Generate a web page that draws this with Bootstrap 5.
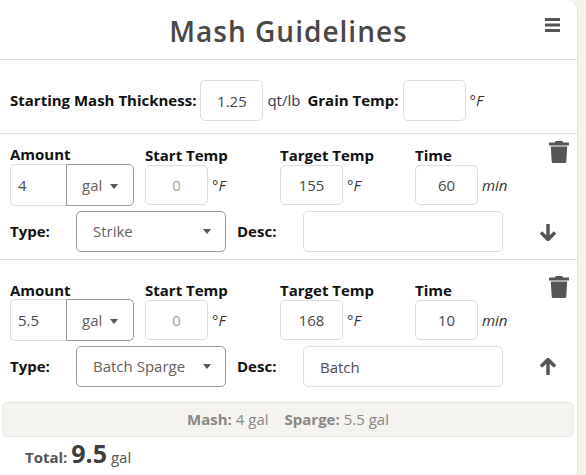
<!DOCTYPE html>
<html lang="en">

<head>
    <meta charset="UTF-8">
    <meta name="viewport" content="width=device-width, initial-scale=1.0">
    <title>Mash Guidelines</title>
    <link href="https://cdn.jsdelivr.net/npm/bootstrap@5.3.0/dist/css/bootstrap.min.css" rel="stylesheet">
    <style>
        body { background: #f4f3ef; font-family: "Open Sans", sans-serif; font-size: 15px; color: #252422; }
        .mash-panel { width: 578px; height: 475px; background: #fff; border-right: 1px solid #e6e4de; border-top-right-radius: 12px; overflow: hidden; }
        .mash-head { height: 60px; border-bottom: 1px solid #ddd; position: relative; }
        .mash-title { font-size: 28px; font-weight: 600; letter-spacing: 1px; color: #4a4744; margin: 0; line-height: 63px; text-align: center; }
        .menu-btn { position: absolute; left: 545px; top: 18px; width: 15px; height: 14px; }
        .top-row { height: 74px; padding: 8px 0 0 10px; border-bottom: 1px solid #ddd; }
        .lbl { font-weight: 700; color: #111; }
        .grain-lbl { margin-left: 7px; }
        .lbl-top { font-weight: 700; color: #111; line-height: 22px; height: 20px; }
        .lbl-amt { line-height: 20px; }
        .box { border: 1px solid #ddd; border-radius: 5px; height: 41px; font-size: 15px; color: #4a4a4a; text-align: center; padding: 0 8px; box-shadow: none; }
        .box-thick { width: 63px; }
        .box-num { width: 63px; height: 40px; }
        .box-off { color: #a5a29c; background: #fff; }
        .unit { color: #2c3e50; }
        .unit-i { color: #333; font-style: italic; margin-left: 4px; }
        .num-row { height: 42px; }
        .mash-block { border-bottom: 1px solid #ddd; position: relative; padding-left: 10px; }
        .block-one { height: 126px; padding-top: 10px; }
        .block-two { height: 135px; padding-top: 19px; border-bottom: 0; }
        .block-two .lbl-amt { line-height: 22px; }
        .amt-group { width: 124px; height: 42px; }
        .amt-input { width: 56px; height: 42px; border: 1px solid #ddd; border-right: 0; border-radius: 5px 0 0 5px; color: #4a4a4a; font-size: 15px; padding: 0 7px; }
        .amt-unit { flex: 1; height: 42px; border: 1px solid #999; border-radius: 0 5px 5px 0; background: #fff; color: #66615b; font-size: 15px; padding: 0 0 0 15px; }
        .caret-mark { display: inline-block; border-top: 5px solid #555; border-left: 4px solid transparent; border-right: 4px solid transparent; vertical-align: 2px; }
        .val-col { width: 135px; }
        .type-row { margin-top: 5px; height: 41px; }
        .type-lbl { width: 66px; }
        .type-select { width: 150px; height: 41px; border: 1px solid #999; border-radius: 5px; background: #fff; color: #66615b; font-size: 15px; padding: 0 14px 0 16px; }
        .desc-lbl { width: 66px; margin-left: 11px; }
        .desc-input { width: 200px; height: 41px; border: 1px solid #ddd; border-radius: 5px; color: #4a4a4a; font-size: 15px; padding: 0 16px; }
        .trash-btn { position: absolute; left: 549px; width: 20px; height: 22px; }
        .one-trash { top: 7px; }
        .two-trash { top: 16px; }
        .arrow-btn { margin-left: 36px; width: 18px; height: 18px; }
        .sum-bar { margin: 7px 3px 0 2px; height: 35px; background: #f4f3ef; border: 1px solid #e9e7e1; border-radius: 5px; color: #8a8782; line-height: 33px; text-align: center; }
        .sum-gap { margin-left: 16px; }
        .total-row { padding-left: 25px; color: #555; line-height: 32px; white-space: nowrap; }
        .total-num { font-size: 25px; font-weight: 700; color: #403d39; }
    </style>
</head>

<body>

    <div class="mash-panel">
        <div class="mash-head">
            <h2 class="mash-title">Mash Guidelines</h2>
            <svg class="menu-btn" viewBox="0 0 15 14"><path d="M0 0h15v3H0zM0 5.500h15v3H0zM0 11h15v3H0z" fill="#555"/></svg>
        </div>

        <div class="top-row d-flex align-items-center">
            <span class="lbl">Starting Mash Thickness:</span>
            <input class="box box-thick ms-1" value="1.25">
            <span class="unit ms-1">qt/lb</span>
            <span class="lbl grain-lbl">Grain Temp:</span>
            <input class="box box-thick ms-1">
            <span class="unit-i">°F</span>
        </div>

        <div class="mash-block block-one">
            <svg class="trash-btn one-trash" viewBox="0 0 20 22"><path d="M0 1.500h6l.6-1.500h6.800l.6 1.500h6v3H0zM1.800 5.500h16.400l-.9 15q-.1 1.500-1.500 1.500H4.200q-1.400 0-1.500-1.500z" fill="#555"/></svg>
            <div class="d-flex">
                <div class="val-col">
                    <div class="lbl-top lbl-amt">Amount</div>
                    <div class="amt-group d-flex">
                        <input class="amt-input" value="4">
                        <button class="amt-unit text-start">gal <span class="caret-mark ms-1"></span></button>
                    </div>
                </div>
                <div class="val-col">
                    <div class="lbl-top">Start Temp</div>
                    <div class="num-row d-flex align-items-center"><input class="box box-num box-off" value="0"><span class="unit-i">°F</span></div>
                </div>
                <div class="val-col">
                    <div class="lbl-top">Target Temp</div>
                    <div class="num-row d-flex align-items-center"><input class="box box-num" value="155"><span class="unit-i">°F</span></div>
                </div>
                <div class="val-col">
                    <div class="lbl-top">Time</div>
                    <div class="num-row d-flex align-items-center"><input class="box box-num" value="60"><span class="unit-i">min</span></div>
                </div>
            </div>
            <div class="type-row d-flex align-items-center">
                <span class="lbl type-lbl">Type:</span>
                <button class="type-select d-flex align-items-center justify-content-between"><span>Strike</span><span class="caret-mark"></span></button>
                <span class="lbl desc-lbl">Desc:</span>
                <input class="desc-input">
                <svg class="arrow-btn" viewBox="0 0 18 18"><path d="M9 1v15M2 9.500l7 7 7-7" fill="none" stroke="#555" stroke-width="3.500"/></svg>
            </div>
        </div>

        <div class="mash-block block-two">
            <svg class="trash-btn two-trash" viewBox="0 0 20 22"><path d="M0 1.500h6l.6-1.500h6.800l.6 1.500h6v3H0zM1.800 5.500h16.400l-.9 15q-.1 1.500-1.500 1.500H4.200q-1.400 0-1.500-1.500z" fill="#555"/></svg>
            <div class="d-flex">
                <div class="val-col">
                    <div class="lbl-top lbl-amt">Amount</div>
                    <div class="amt-group d-flex">
                        <input class="amt-input" value="5.5">
                        <button class="amt-unit text-start">gal <span class="caret-mark ms-1"></span></button>
                    </div>
                </div>
                <div class="val-col">
                    <div class="lbl-top">Start Temp</div>
                    <div class="num-row d-flex align-items-center"><input class="box box-num box-off" value="0"><span class="unit-i">°F</span></div>
                </div>
                <div class="val-col">
                    <div class="lbl-top">Target Temp</div>
                    <div class="num-row d-flex align-items-center"><input class="box box-num" value="168"><span class="unit-i">°F</span></div>
                </div>
                <div class="val-col">
                    <div class="lbl-top">Time</div>
                    <div class="num-row d-flex align-items-center"><input class="box box-num" value="10"><span class="unit-i">min</span></div>
                </div>
            </div>
            <div class="type-row d-flex align-items-center">
                <span class="lbl type-lbl">Type:</span>
                <button class="type-select d-flex align-items-center justify-content-between"><span>Batch Sparge</span><span class="caret-mark"></span></button>
                <span class="lbl desc-lbl">Desc:</span>
                <input class="desc-input" value="Batch">
                <svg class="arrow-btn" viewBox="0 0 18 18"><path d="M9 17V2M2 8.500l7-7 7 7" fill="none" stroke="#555" stroke-width="3.500"/></svg>
            </div>
        </div>

        <div class="sum-bar"><b>Mash:</b> 4 gal<b class="sum-gap">Sparge:</b> 5.5 gal</div>
        <div class="total-row"><b>Total:</b> <span class="total-num">9.5</span> gal</div>
    </div>

    <script src="https://cdn.jsdelivr.net/npm/bootstrap@5.3.0/dist/js/bootstrap.bundle.min.js"></script>

</body>

</html>
